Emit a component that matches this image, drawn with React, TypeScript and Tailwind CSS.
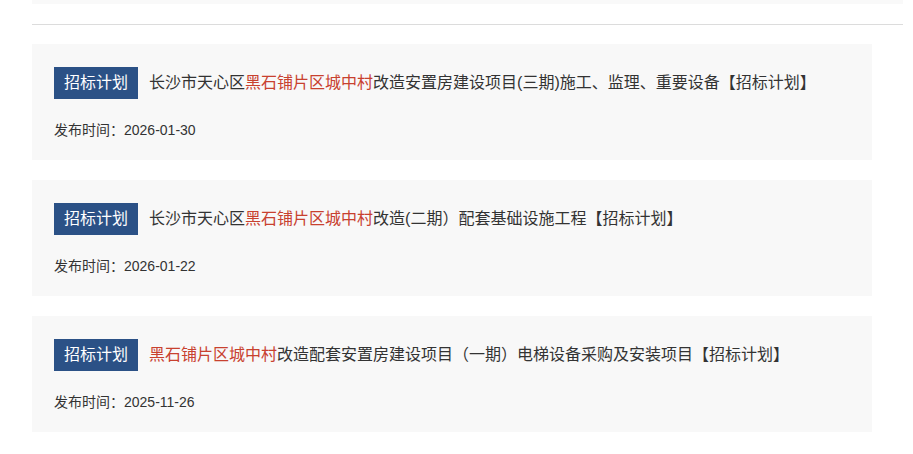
const items = [
  {
    pre: "长沙市天心区",
    red: "黑石铺片区城中村",
    post: "改造安置房建设项目(三期)施工、监理、重要设备【招标计划】",
    date: "2026-01-30",
  },
  {
    pre: "长沙市天心区",
    red: "黑石铺片区城中村",
    post: "改造(二期）配套基础设施工程【招标计划】",
    date: "2026-01-22",
  },
  {
    pre: "",
    red: "黑石铺片区城中村",
    post: "改造配套安置房建设项目（一期）电梯设备采购及安装项目【招标计划】",
    date: "2025-11-26",
  },
];

const App = () => {
  return (
    <div
      className="w-[913px] h-[454px] bg-white overflow-hidden pl-[32px]"
      style={{ fontFamily: '"Liberation Sans", "Noto Sans CJK SC", sans-serif' }}
    >
      {/* previous item tail + divider */}
      <div className="w-[871px] h-[4px] bg-[#f9f9f9]" />
      <div className="w-[871px] h-[1px] mt-[20px] bg-[#dcdcdc]" />

      <div className="flex flex-col gap-[20px] mt-[19px]">
        {items.map((item) => (
          <div
            key={item.date}
            className="w-[840px] h-[116px] bg-[#f8f8f8] px-[22px] pt-[23px]"
          >
            <div className="flex items-center">
              <span className="h-[32px] px-[10px] bg-[#2b5186] text-white text-[16px] leading-[32px]">
                招标计划
              </span>
              <span className="ml-[11px] text-[16px] text-[#333] leading-[32px] whitespace-nowrap">
                {item.pre}
                <span className="text-[#c8412f]">{item.red}</span>
                {item.post}
              </span>
            </div>
            <p className="mt-[22px] text-[14px] leading-[18px] text-[#333]">
              发布时间：{item.date}
            </p>
          </div>
        ))}
      </div>
    </div>
  );
};

export default App;
